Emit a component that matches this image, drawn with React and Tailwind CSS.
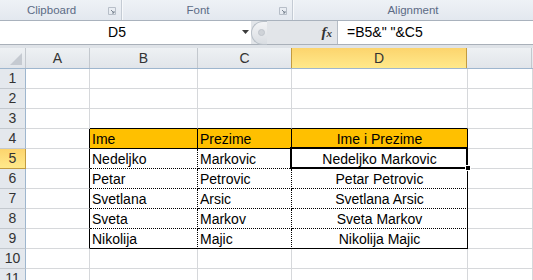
import React from "react";

const COLS = ["A", "B", "C", "D", "E"];
const WIDTHS = ["w-[64px]", "w-[108px]", "w-[94px]", "w-[176px]", "w-[65px]"];

const DATA = [
  ["Nedeljko", "Markovic"],
  ["Petar", "Petrovic"],
  ["Svetlana", "Arsic"],
  ["Sveta", "Markov"],
  ["Nikolija", "Majic"],
];

function Launcher() {
  return (
    <svg width="8" height="8" viewBox="0 0 8 8" className="shrink-0">
      <path d="M0.5 0.5h7v7h-7z" fill="none" stroke="#b7bec8" />
      <path d="M3 3l3 3M6 4v2h-2" fill="none" stroke="#7b8592" strokeWidth="1" />
    </svg>
  );
}

function Group({ label, width, last }) {
  return (
    <div
      className={`flex items-center h-full ${width} ${
        last ? "" : "border-r border-r-[#c4cbd4] shadow-[1px_0_0_#f7f9fb]"
      }`}
    >
      <div className="flex-1 text-center text-[11.5px] text-[#5c6b85] pt-[1px]">
        {label}
      </div>
      {!last && (
        <div className="w-[18px] flex justify-center pt-[2px]">
          <Launcher />
        </div>
      )}
    </div>
  );
}

function cellBorders(row, col) {
  // col index: 0=A,1=B,2=C,3=D,4=E
  let right = "border-r-[#d6d8db]";
  let bottom = "border-b-[#d6d8db]";
  let rightStyle = "";
  let bottomStyle = "";
  const inTable = row >= 4 && row <= 9;
  if (inTable) {
    if (col === 0) right = "border-r-black";
    if (col === 3) right = "border-r-black";
    if (col === 1 || col === 2) {
      right = "border-r-black";
      if (row > 4) rightStyle = "[border-right-style:dotted]";
    }
  }
  if (col >= 1 && col <= 3) {
    if (row === 3 || row === 4 || row === 9) bottom = "border-b-black";
    if (row >= 5 && row <= 8) {
      bottom = "border-b-black";
      bottomStyle = "[border-bottom-style:dotted]";
    }
  }
  return `${right} ${bottom} ${rightStyle} ${bottomStyle}`;
}

function Cell({ row, col }) {
  let text = "";
  let bg = "bg-white";
  let align = "justify-start pl-[2px]";
  if (row === 4 && col >= 1 && col <= 3) {
    bg = "bg-[#ffc000]";
    text = ["Ime", "Prezime", "Ime i Prezime"][col - 1];
  }
  if (row >= 5 && row <= 9) {
    const d = DATA[row - 5];
    if (col === 1) text = d[0];
    if (col === 2) text = d[1];
    if (col === 3) text = d[0] + " " + d[1];
  }
  if (col === 3) align = "justify-center";
  const selected = row === 5 && col === 3;
  return (
    <div
      className={`relative flex items-center h-[20px] border-r border-b ${WIDTHS[col]} ${bg} ${align} ${cellBorders(
        row,
        col
      )}`}
    >
      <span className="pt-[1px] whitespace-nowrap">{text}</span>
      {selected && (
        <>
          <div className="absolute z-10 -left-[2px] -top-[2px] w-[178px] h-[22px] border-2 border-black pointer-events-none" />
          <div className="absolute z-20 left-[173px] top-[16px] w-[6px] h-[6px] bg-black border border-white pointer-events-none" />
        </>
      )}
    </div>
  );
}

export default function App() {
  const rows = [1, 2, 3, 4, 5, 6, 7, 8, 9, 10, 11];
  return (
    <div
      className="w-[533px] h-[280px] overflow-hidden bg-white text-[14px] text-black"
      style={{ fontFamily: '"Liberation Sans", Arial, sans-serif' }}
    >
      {/* ribbon group labels */}
      <div className="flex h-[21px] bg-gradient-to-b from-[#eef2f6] to-[#e3e8ef] border-b border-b-[#a9b2bd] overflow-hidden">
        <Group label="Clipboard" width="w-[150px]" />
        <Group label="Font" width="w-[210px]" />
        <Group label="Alignment" width="w-[240px] shrink-0" last />
      </div>

      {/* formula bar */}
      <div className="h-[27px] bg-[#dfe3e8] pb-[3px]">
        <div className="flex h-[24px] border-b border-b-[#a9b0b9]">
          <div className="w-[251px] bg-white flex items-center">
            <div className="w-[234px] text-center">D5</div>
            <svg width="8" height="5" viewBox="0 0 8 5" className="ml-[8px]">
              <path d="M0 0h7l-3.5 4z" fill="#3c3c3c" />
            </svg>
          </div>
          <div className="w-[87px] flex items-center bg-[#e2e5e9] border-r border-r-[#b5bcc5]">
            <div className="w-[16px] h-[24px] rounded-l-full border border-r-0 border-[#b9c0c8] bg-gradient-to-b from-[#f3f4f6] to-[#d9dde2] flex items-center justify-center">
              <div className="w-[7px] h-[7px] rounded-full bg-[#cfd3d8] border border-[#c0c5cc] ml-[3px]" />
            </div>
            <div className="flex-1" />
            <span
              className="italic font-bold text-[15px] text-[#333] mr-[5px] leading-none"
              style={{ fontFamily: '"Liberation Serif", serif' }}
            >
              f<span className="text-[11px]">x</span>
            </span>
          </div>
          <div className="flex-1 bg-white flex items-center pl-[9px]">=B5&amp;" "&amp;C5</div>
        </div>
      </div>

      {/* grid */}
      <div className="flex h-[21px] border-b border-b-[#9eb6ce] bg-gradient-to-b from-[#eef1f4] to-[#e1e5ea]">
        <div className="w-[26px] border-r border-r-[#c3c8ce] flex items-end justify-end p-[3px]">
          <svg width="12" height="12" viewBox="0 0 12 12">
            <path d="M12 0v12h-12z" fill="#c5cad1" />
          </svg>
        </div>
        {COLS.map((c, i) => (
          <div
            key={c}
            className={`${WIDTHS[i]} flex items-center justify-center border-r ${
              c === "D"
                ? "bg-gradient-to-b from-[#fcd46d] to-[#ffe98b] border-r-[#c29b40] border-l border-l-[#c29b40] -ml-[1px] text-[#333]"
                : "border-r-[#c3c8ce] text-[#333]"
            }`}
          >
            {c === "E" ? "" : c}
          </div>
        ))}
      </div>
      {rows.map((r) => (
        <div key={r} className="flex">
          <div
            className={`w-[26px] h-[20px] flex items-center justify-center border-r border-b text-[#333] ${
              r === 5
                ? "bg-gradient-to-b from-[#fcd46d] to-[#ffe98b] border-r-[#c29b40] border-b-[#c29b40]"
                : "bg-[#e4e8ed] border-r-[#9eb6ce] border-b-[#c3c8ce]"
            }`}
          >
            {r}
          </div>
          {COLS.map((c, i) => (
            <Cell key={c} row={r} col={i} />
          ))}
        </div>
      ))}
    </div>
  );
}
